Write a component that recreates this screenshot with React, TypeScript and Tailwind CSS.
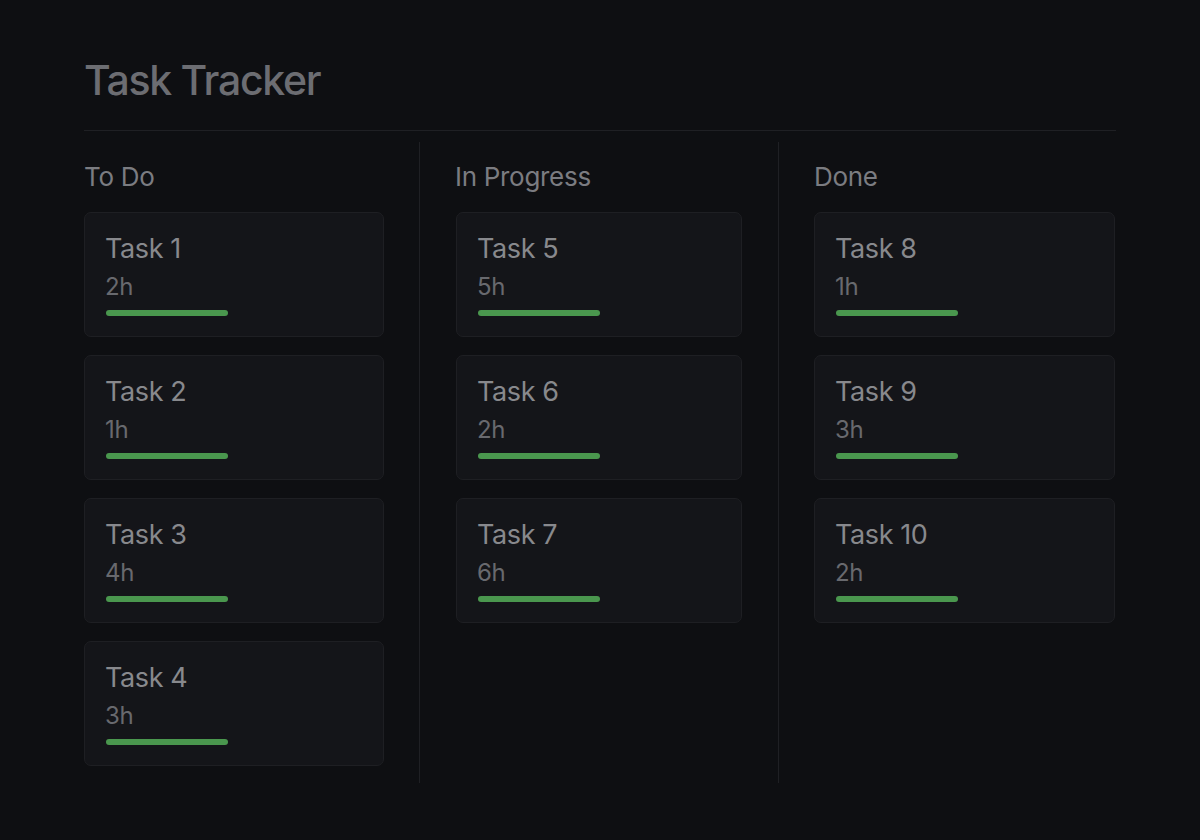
import React from "react";

type Task = { name: string; hours: string };

const columns: { title: string; tasks: Task[]; colClass: string; cardClass: string }[] = [
  {
    title: "To Do",
    tasks: [
      { name: "Task 1", hours: "2h" },
      { name: "Task 2", hours: "1h" },
      { name: "Task 3", hours: "4h" },
      { name: "Task 4", hours: "3h" },
    ],
    colClass: "w-[336px] pl-0 border-r border-[#1f2024]",
    cardClass: "w-[300px]",
  },
  {
    title: "In Progress",
    tasks: [
      { name: "Task 5", hours: "5h" },
      { name: "Task 6", hours: "2h" },
      { name: "Task 7", hours: "6h" },
    ],
    colClass: "w-[359px] pl-[35px] border-r border-[#1f2024]",
    cardClass: "w-[286px] ml-px",
  },
  {
    title: "Done",
    tasks: [
      { name: "Task 8", hours: "1h" },
      { name: "Task 9", hours: "3h" },
      { name: "Task 10", hours: "2h" },
    ],
    colClass: "flex-1 pl-[35px]",
    cardClass: "w-[301px]",
  },
];

function TaskCard({ task, className }: { task: Task; className: string }) {
  return (
    <div
      className={`${className} h-[125px] rounded-[7px] border border-[#1e1f23] bg-[#141519] pl-[21px] pt-[20px]`}
    >
      <div className="-ml-px text-[27px] leading-[32px] tracking-[-0.4px] text-[#88898d]">{task.name}</div>
      <div className="-ml-px mt-[7px] text-[24px] leading-[30px] tracking-[-0.3px] text-[#68696e]">{task.hours}</div>
      <div className="mt-[8px] h-[6px] w-[122px] rounded-full bg-[#4a974e]" />
    </div>
  );
}

export default function App() {
  return (
    <div
      className="min-h-screen w-full bg-[#0e0f12] px-[84px] pt-[55px]"
      style={{ fontFamily: "Inter, 'Noto Sans', sans-serif" }}
    >
      <h1 className="text-[41px] leading-[50px] font-medium tracking-[-1.3px] text-[#6c6d72]">
        Task Tracker
      </h1>
      <div className="mt-[25px] h-px w-[1032px] bg-[#1f2024]" />
      <div className="mt-[11px] flex h-[641px] w-[1032px]">
        {columns.map((col) => (
          <div key={col.title} className={`${col.colClass} pt-[18px]`}>
            <div className="text-[26px] leading-[34px] tracking-[-0.3px] text-[#7b7c81]">{col.title}</div>
            <div className="mt-[18px] flex flex-col gap-[18px]">
              {col.tasks.map((t) => (
                <TaskCard key={t.name} task={t} className={col.cardClass} />
              ))}
            </div>
          </div>
        ))}
      </div>
    </div>
  );
}
